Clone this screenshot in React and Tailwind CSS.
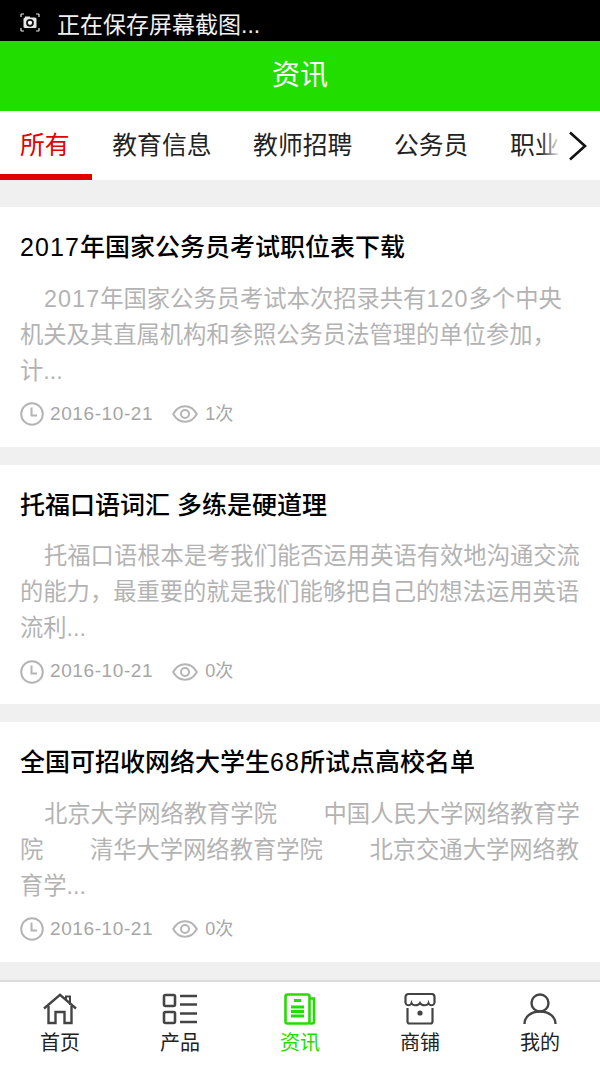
const FONT = "font-['Liberation_Sans','Noto_Sans_CJK_SC',sans-serif]";

const tabs = ["所有", "教育信息", "教师招聘", "公务员", "职业考试"];

const articles = [
  {
    title: "2017年国家公务员考试职位表下载",
    lines: ["2017年国家公务员考试本次招录共有120多个中央", "机关及其直属机构和参照公务员法管理的单位参加，", "计..."],
    date: "2016-10-21",
    views: "1次",
  },
  {
    title: "托福口语词汇 多练是硬道理",
    lines: ["托福口语根本是考我们能否运用英语有效地沟通交流", "的能力，最重要的就是我们能够把自己的想法运用英语", "流利..."],
    date: "2016-10-21",
    views: "0次",
  },
  {
    title: "全国可招收网络大学生68所试点高校名单",
    lines: ["北京大学网络教育学院　　中国人民大学网络教育学", "院　　清华大学网络教育学院　　北京交通大学网络教", "育学..."],
    date: "2016-10-21",
    views: "0次",
  },
];

// digits in the reference run wider than Liberation's
function Wide({ text }) {
  return text.split(/(\d+)/).map((part, i) =>
    /\d/.test(part) ? <span key={i} className="tracking-[1.1px]">{part}</span> : part
  );
}

function HomeIcon() {
  return (
    <svg width="36" height="32" viewBox="0 0 36 32" fill="none" stroke="#444" strokeWidth="2.4">
      <path d="M2 15.500 18 1.800l16 13.700" />
      <path d="M24 6V3.500h4v8.500" strokeWidth="2" />
      <path d="M6.500 13v17h7V19h9v11h7V13" />
    </svg>
  );
}

function ListIcon() {
  return (
    <svg width="36" height="32" viewBox="0 0 36 32" fill="none" stroke="#444" strokeWidth="2.600">
      <rect x="2" y="2" width="11" height="11" rx="1.500" />
      <rect x="2" y="19" width="11" height="11" rx="1.500" />
      <path d="M18 3h17M18 11.500h17M18 20.500h17M18 29h17" />
    </svg>
  );
}

function NewsIcon() {
  return (
    <svg width="32" height="32" viewBox="0 0 32 32" fill="none" stroke="#22dd00" strokeWidth="2.600">
      <rect x="1.500" y="1.500" width="24" height="29" rx="2" />
      <path d="M25.500 30.500H28a2 2 0 0 0 2-2V5.500h-4.500" />
      <path d="M10 7.500h7M7 14h13M7 18.500h13M7 23h13" strokeWidth="2.800" />
    </svg>
  );
}

function ShopIcon() {
  return (
    <svg width="32" height="32" viewBox="0 0 32 32" fill="none" stroke="#444" strokeWidth="2.200">
      <path d="M3.500 15v13.500a2 2 0 0 0 2 2h21a2 2 0 0 0 2-2V15" />
      <path d="M1.500 10V4a3 3 0 0 1 3-3h23a3 3 0 0 1 3 3v6" />
      <path d="M1.500 10c1 3 5 3 6 0 1 3 7 3 8.500 0 1.500 3 7.500 3 8.500 0 1 3 5 3 6 0" strokeWidth="2" />
      <circle cx="16" cy="20" r="2.600" fill="#444" stroke="none" />
    </svg>
  );
}

function UserIcon() {
  return (
    <svg width="34" height="32" viewBox="0 0 34 32" fill="none" stroke="#444" strokeWidth="2.400">
      <circle cx="17" cy="10" r="8.500" />
      <path d="M1.500 31c0-7 6-12.500 15.500-12.500S32.500 24 32.500 31" />
    </svg>
  );
}

function ClockIcon() {
  return (
    <svg width="24" height="24" viewBox="0 0 24 24" fill="none" stroke="#b4b4b4" strokeWidth="2">
      <circle cx="12" cy="12" r="10.800" />
      <path d="M11.500 5.500V13.500H17" />
    </svg>
  );
}

function EyeIcon() {
  return (
    <svg width="26" height="18" viewBox="0 0 26 18" fill="none" stroke="#b4b4b4" strokeWidth="2">
      <path d="M1.200 9C4 4 8 1.200 13 1.200S22 4 24.800 9C22 14 18 16.800 13 16.800S4 14 1.200 9Z" />
      <circle cx="13" cy="9" r="4" />
    </svg>
  );
}

function Article({ item }) {
  return (
    <article className="h-[239.6px] shrink-0 bg-white px-5 pt-[23px]">
      <h2 className="whitespace-nowrap text-[25px] leading-[34px] font-medium text-black">
        <Wide text={item.title} />
      </h2>
      <div className="mt-[16.5px] h-[108px] text-[23.3px] leading-[36px] text-[#b3b3b3]">
        {item.lines.map((line, i) => (
          <div key={i} className={i === 0 ? "whitespace-nowrap pl-[24px]" : "whitespace-nowrap"}>
            <Wide text={line} />
          </div>
        ))}
      </div>
      <div className="mt-[13.5px] flex h-[24px] items-center text-[#a6a6a6]">
        <ClockIcon />
        <span className="ml-[6px] text-[19px] tracking-[0.6px]">{item.date}</span>
        <span className="ml-[19px]"><EyeIcon /></span>
        <span className="ml-[7px] text-[18px]">{item.views}</span>
      </div>
    </article>
  );
}

const navItems = [
  { label: "首页", icon: <HomeIcon /> },
  { label: "产品", icon: <ListIcon /> },
  { label: "资讯", icon: <NewsIcon />, active: true },
  { label: "商铺", icon: <ShopIcon /> },
  { label: "我的", icon: <UserIcon /> },
];

export default function App() {
  return (
    <div className={`${FONT} flex h-[1067px] w-[600px] flex-col overflow-hidden bg-[#f0f0f0]`}>
      <div className="flex h-[41px] shrink-0 items-start bg-black pt-[13px] pl-[20px] text-[23px] leading-[24px] text-[#f0f0f0]">
        <svg width="20" height="19" viewBox="0 0 20 19" fill="none" stroke="#e8e8e8">
          <path d="M1 4V1.500Q1 1 1.500 1H4M16 1h2.500q.5 0 .5.5V4M19 15v2.500q0 .5-.5.5H16M4 18H1.500q-.5 0-.5-.5V15" strokeWidth="1.200" />
          <rect x="3.500" y="4.500" width="13" height="10.500" rx="1.500" fill="#e8e8e8" stroke="none" />
          <rect x="5" y="3.500" width="5" height="2" fill="#e8e8e8" stroke="none" />
          <circle cx="10" cy="9.800" r="3" fill="#fff" stroke="#111" strokeWidth="1.800" />
        </svg>
        <span className="ml-[17px]">正在保存屏幕截图...</span>
      </div>

      <header className="flex h-[70px] shrink-0 items-center justify-center bg-[#22dd00] text-[28px] text-white">
        资讯
      </header>

      <nav className="relative flex h-[69px] shrink-0 overflow-hidden bg-white">
        {tabs.map((tab, i) => (
          <div
            key={tab}
            className={
              i === 0
                ? "w-[91.5px] shrink-0 border-b-[6px] border-[#e00000] px-[20px] pt-[17px] text-[24.8px] leading-[36px] text-[#e00000]"
                : "shrink-0 px-[20.800px] pt-[17px] text-[24.8px] leading-[36px] text-[#222]"
            }
          >
            {tab}
          </div>
        ))}
        <div className="absolute top-0 right-0 flex h-full w-[60px] items-center bg-linear-to-r from-transparent via-white via-35% to-white pl-[28px]">
          <svg width="20" height="30" viewBox="0 0 20 30" fill="none" stroke="#111" strokeWidth="2.600">
            <path d="M2 1.500 17 15 2 28.500" />
          </svg>
        </div>
      </nav>

      <main className="flex min-h-0 flex-1 flex-col gap-[18px] overflow-hidden pt-[27px]">
        {articles.map((item) => (
          <Article key={item.title} item={item} />
        ))}
      </main>

      <footer className="flex h-[87px] shrink-0 border-t-2 border-[#dcdcdc] bg-white">
        {navItems.map((nav) => (
          <div key={nav.label} className="flex flex-1 flex-col items-center pt-[11px]">
            <div className="flex h-[32px] items-center">{nav.icon}</div>
            <span className={nav.active ? "mt-[4px] text-[20px] leading-[28px] text-[#22dd00]" : "mt-[4px] text-[20px] leading-[28px] text-[#222]"}>
              {nav.label}
            </span>
          </div>
        ))}
      </footer>
    </div>
  );
}
